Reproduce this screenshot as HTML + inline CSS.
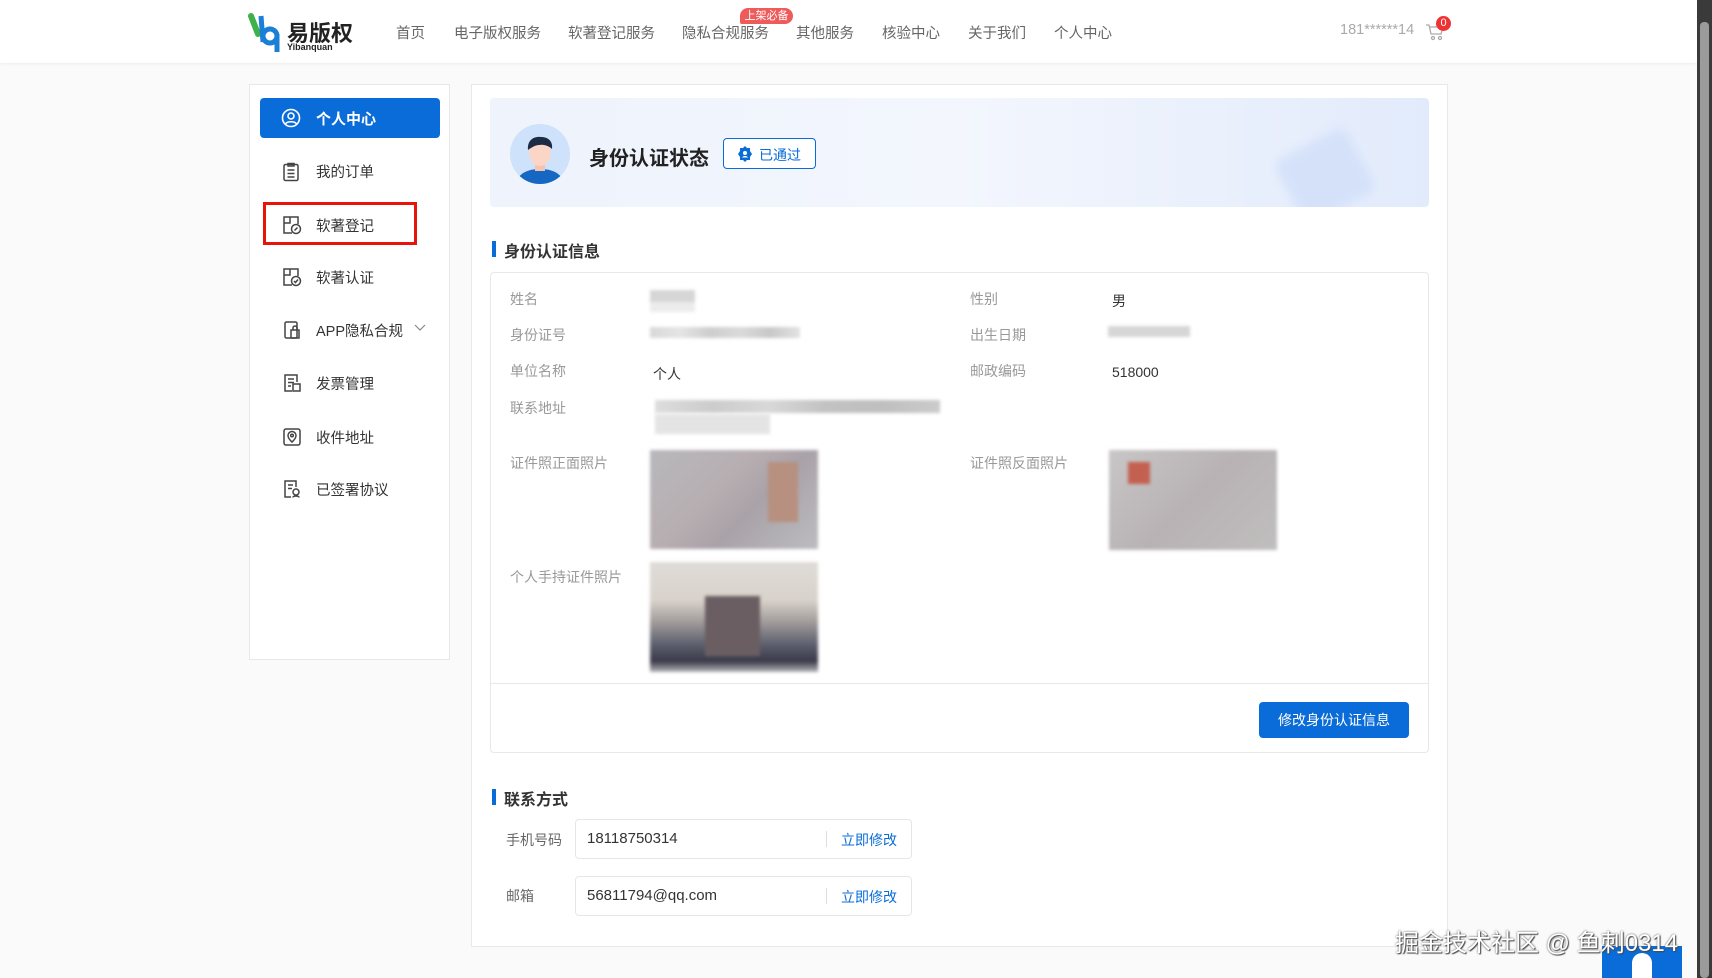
<!DOCTYPE html>
<html><head><meta charset="utf-8"><style>
*{margin:0;padding:0;box-sizing:border-box}
body{width:1712px;height:978px;overflow:hidden;background:#fafafa;font-family:"Liberation Sans","Noto Sans CJK SC",sans-serif;position:relative;color:#333}
.a{position:absolute}
.hdr{left:0;top:0;width:1697px;height:63px;background:#fff;box-shadow:0 1px 3px rgba(0,0,0,.06)}
.nav{top:22px;font-size:14.5px;color:#666;white-space:nowrap}
.side{left:249px;top:84px;width:201px;height:576px;background:#fff;border:1px solid #e8e8e8}
.mi{left:283px;font-size:14.5px;color:#333}
.ic{position:absolute}
.main{left:471px;top:84px;width:977px;height:863px;background:#fff;border:1px solid #e8e8e8}
.lbl{font-size:14px;color:#999}
.val{font-size:14px;color:#333}
.blur{filter:blur(1.5px)}
.h2{font-size:16px;font-weight:bold;color:#333;padding-left:12px}
.h2:before{content:"";position:absolute;left:0;top:3px;width:4px;height:16px;background:#0a6cd8}
.inp{left:575px;width:337px;height:40px;border:1px solid #e6e6e6;border-radius:4px;background:#fff}
</style></head><body>
<div class="a hdr"></div>
<svg class="a" style="left:248px;top:12px" width="42" height="42" viewBox="0 0 42 42"><path d="M3 4 L10 22" stroke="#3db24a" stroke-width="6" stroke-linecap="round"/><path d="M13 4 L15 30" stroke="#1a7fd6" stroke-width="5"/><circle cx="22" cy="24" r="7" fill="none" stroke="#1a7fd6" stroke-width="5"/><path d="M29 22 L29 40" stroke="#1a7fd6" stroke-width="5"/></svg>
<div class="a" style="left:287px;top:16px;font-size:22px;font-weight:bold;color:#222">易版权</div>
<div class="a" style="left:287px;top:42px;font-size:9px;font-weight:bold;color:#222">Yibanquan</div>
<div class="a nav" style="left:396px">首页</div>
<div class="a nav" style="left:454px">电子版权服务</div>
<div class="a nav" style="left:568px">软著登记服务</div>
<div class="a nav" style="left:682px">隐私合规服务</div>
<div class="a" style="left:740px;top:8px;width:53px;height:16px;background:#ef5a5a;border-radius:8px 8px 8px 2px;color:#fff;font-size:11px;text-align:center;line-height:16px">上架必备</div>
<div class="a nav" style="left:796px">其他服务</div>
<div class="a nav" style="left:882px">核验中心</div>
<div class="a nav" style="left:968px">关于我们</div>
<div class="a nav" style="left:1054px">个人中心</div>
<div class="a nav" style="left:1340px;color:#aaa">181******14</div>
<svg class="a" style="left:1425px;top:22px" width="20" height="20" viewBox="0 0 20 20" fill="none" stroke="#aaa" stroke-width="1.3"><path d="M1 3h3l2 9h10l2-7H5"/><circle cx="8" cy="16" r="1.5"/><circle cx="15" cy="16" r="1.5"/></svg>
<div class="a" style="left:1436px;top:16px;width:15px;height:15px;border-radius:50%;background:#e33;color:#fff;font-size:11px;text-align:center;line-height:15px">0</div>
<div class="a" style="left:1697px;top:0;width:15px;height:978px;background:#3a3a3a"></div>
<div class="a" style="left:1700px;top:22px;width:9px;height:956px;background:#9b9b9b;border-radius:4px"></div>

<div class="a side"></div>
<div class="a" style="left:260px;top:98px;width:180px;height:40px;background:#0a6cd8;border-radius:4px"></div>
<svg class="a" style="left:281px;top:108px" width="20" height="20" viewBox="0 0 20 20" fill="none" stroke="#fff" stroke-width="1.6"><circle cx="10" cy="10" r="8.5"/><circle cx="10" cy="8" r="3"/><path d="M4.5 16c1.5-3 9.5-3 11 0"/></svg>
<div class="a" style="left:316px;top:108px;font-size:15px;font-weight:bold;color:#fff">个人中心</div>
<svg class="ic" style="left:282px;top:162px" width="18" height="20" viewBox="0 0 18 20" fill="none" stroke="#444" stroke-width="1.5"><rect x="2" y="2.5" width="14" height="16" rx="1.5"/><path d="M6 1.5h6v2.5H6zM5.5 8h7M5.5 11.5h7M5.5 15h7"/></svg>
<div class="a mi" style="left:316px;top:161px">我的订单</div>
<svg class="ic" style="left:282px;top:215px" width="20" height="20" viewBox="0 0 20 20" fill="none" stroke="#444" stroke-width="1.5"><path d="M10 18H2V2h14v7M2 8h6V2"/><circle cx="14" cy="14" r="4.5"/><path d="M12.5 15.5l3-3"/></svg>
<div class="a mi" style="left:316px;top:215px">软著登记</div>
<div class="a" style="left:263px;top:202px;width:154px;height:43px;border:3px solid #e8140c"></div>
<svg class="ic" style="left:282px;top:267px" width="20" height="20" viewBox="0 0 20 20" fill="none" stroke="#444" stroke-width="1.5"><path d="M10 18H2V2h14v7M2 8h6V2"/><circle cx="14" cy="14" r="4.5"/><path d="M12 14l1.5 1.5 2.5-3"/></svg>
<div class="a mi" style="left:316px;top:267px">软著认证</div>
<svg class="ic" style="left:282px;top:320px" width="20" height="20" viewBox="0 0 20 20" fill="none" stroke="#444" stroke-width="1.5"><rect x="3" y="2" width="12" height="16" rx="1.5"/><rect x="9" y="10" width="8" height="8"/><path d="M11 10V8a2 2 0 014 0v2"/></svg>
<div class="a mi" style="left:316px;top:320px">APP隐私合规</div>
<svg class="a" style="left:414px;top:324px" width="12" height="8" viewBox="0 0 12 8" fill="none" stroke="#888" stroke-width="1.2"><path d="M1 1l5 5 5-5"/></svg>
<svg class="ic" style="left:282px;top:373px" width="20" height="20" viewBox="0 0 20 20" fill="none" stroke="#444" stroke-width="1.5"><path d="M15 9V2H3v16h7"/><path d="M6 6h6M6 9.5h6M6 13h3"/><rect x="11" y="11" width="7" height="7"/></svg>
<div class="a mi" style="left:316px;top:373px">发票管理</div>
<svg class="ic" style="left:282px;top:427px" width="20" height="20" viewBox="0 0 20 20" fill="none" stroke="#444" stroke-width="1.5"><rect x="2" y="2" width="16" height="16" rx="2"/><path d="M10 15s-4-3.5-4-6.5a4 4 0 018 0c0 3-4 6.5-4 6.5z"/><circle cx="10" cy="8.5" r="1.3"/></svg>
<div class="a mi" style="left:316px;top:427px">收件地址</div>
<svg class="ic" style="left:282px;top:479px" width="20" height="20" viewBox="0 0 20 20" fill="none" stroke="#444" stroke-width="1.5"><path d="M14 8V2H3v16h6"/><path d="M6 6h5M6 9.5h4"/><circle cx="14" cy="13" r="3"/><path d="M11 18.5c0-2 6-2 6 0"/></svg>
<div class="a mi" style="left:316px;top:479px">已签署协议</div>

<div class="a main"></div>
<div class="a" style="left:490px;top:98px;width:939px;height:109px;border-radius:4px;overflow:hidden;background:linear-gradient(90deg,#eef3fc,#f3f6fd 50%,#e2ebfc)">
<div class="a" style="left:795px;top:42px;width:80px;height:72px;background:#c9daf8;border-radius:10px;transform:rotate(-28deg);filter:blur(5px);opacity:.6"></div>
</div>
<svg class="a" style="left:510px;top:124px" width="60" height="60" viewBox="0 0 60 60"><defs><clipPath id="c"><circle cx="30" cy="30" r="30"/></clipPath></defs><circle cx="30" cy="30" r="30" fill="#cfe2fb"/><g clip-path="url(#c)"><path d="M6 60c2-12 14-15 24-15s22 3 24 15z" fill="#1667c3"/><rect x="25" y="38" width="10" height="9" fill="#f5c4b0"/><ellipse cx="30" cy="29" rx="11" ry="13" fill="#fbd6c6"/><path d="M18 26c-1-10 6-14 13-13 8 0 12 5 11 12-3-3-8-5-13-4-3 0-7 2-11 5z" fill="#1d2b44"/></g></svg>
<div class="a" style="left:589px;top:142px;font-size:20px;font-weight:bold;color:#222">身份认证状态</div>
<div class="a" style="left:723px;top:138px;width:93px;height:31px;border:1px solid #0a6cd8;border-radius:4px;background:#fff"></div>
<svg class="a" style="left:737px;top:146px" width="16" height="16" viewBox="0 0 16 16"><path d="M8 0l2 2h3v3l2 3-2 3v3h-3l-2 2-2-2H3v-3L1 8l2-3V2h3z" fill="#0a6cd8"/><circle cx="8" cy="7" r="2" fill="#fff"/><path d="M5 11.5c1-2 5-2 6 0z" fill="#fff"/></svg>
<div class="a" style="left:759px;top:145px;font-size:14px;color:#0a6cd8">已通过</div>

<div class="a h2" style="left:492px;top:238px">身份认证信息</div>
<div class="a" style="left:490px;top:272px;width:939px;height:481px;border:1px solid #e8e8e8;border-radius:4px"></div>
<div class="a" style="left:490px;top:683px;width:939px;height:1px;background:#e8e8e8"></div>
<div class="a lbl" style="left:510px;top:289px">姓名</div>
<div class="a blur" style="left:650px;top:290px;width:45px;height:22px;background:linear-gradient(#d6d6d6 55%,#ececec 55%)"></div>
<div class="a lbl" style="left:510px;top:325px">身份证号</div>
<div class="a blur" style="left:650px;top:327px;width:150px;height:11px;background:linear-gradient(90deg,#d8d8d8,#e5e5e5,#cdcdcd,#dadada,#c8c8c8,#e2e2e2)"></div>
<div class="a lbl" style="left:510px;top:361px">单位名称</div>
<div class="a val" style="left:653px;top:364px">个人</div>
<div class="a lbl" style="left:510px;top:398px">联系地址</div>
<div class="a blur" style="left:655px;top:400px;width:285px;height:13px;background:linear-gradient(90deg,#ddd,#ccc,#d8d8d8,#c2c2c2,#bfbfbf,#cbcbcb)"></div>
<div class="a blur" style="left:655px;top:414px;width:115px;height:20px;background:#e4e4e4"></div>
<div class="a lbl" style="left:510px;top:453px">证件照正面照片</div>
<div class="a blur" style="left:650px;top:450px;width:168px;height:99px;background:linear-gradient(135deg,#b8b8bc,#b7aeb1 40%,#a9a2a8 60%,#bcbcc0)"></div>
<div class="a blur" style="left:768px;top:462px;width:30px;height:60px;background:#b79080"></div>
<div class="a lbl" style="left:510px;top:567px">个人手持证件照片</div>
<div class="a blur" style="left:650px;top:562px;width:168px;height:110px;background:linear-gradient(#dfdcd8 0,#d8d2ca 35%,#a09a9a 55%,#5d606e 75%,#3a3a4a 90%,#b5b5b8)"></div>
<div class="a blur" style="left:705px;top:596px;width:55px;height:60px;background:#6a5e62"></div>
<div class="a lbl" style="left:970px;top:289px">性别</div>
<div class="a val" style="left:1112px;top:291px">男</div>
<div class="a lbl" style="left:970px;top:325px">出生日期</div>
<div class="a blur" style="left:1108px;top:326px;width:82px;height:11px;background:#d6d6d6"></div>
<div class="a lbl" style="left:970px;top:361px">邮政编码</div>
<div class="a val" style="left:1112px;top:364px">518000</div>
<div class="a lbl" style="left:970px;top:453px">证件照反面照片</div>
<div class="a blur" style="left:1109px;top:450px;width:168px;height:100px;background:linear-gradient(135deg,#c8c6c6,#b8b2b4 50%,#c0bebe)"></div>
<div class="a blur" style="left:1128px;top:462px;width:22px;height:22px;background:#c46050"></div>
<div class="a" style="left:1259px;top:702px;width:150px;height:36px;background:#0a6cd8;border-radius:4px;color:#fff;font-size:14px;text-align:center;line-height:36px">修改身份认证信息</div>

<div class="a h2" style="left:492px;top:786px">联系方式</div>
<div class="a lbl" style="left:506px;top:830px;color:#666">手机号码</div>
<div class="a inp" style="top:819px"></div>
<div class="a" style="left:587px;top:830px;font-size:15px;color:#333">18118750314</div>
<div class="a" style="left:826px;top:831px;width:1px;height:16px;background:#ddd"></div>
<div class="a" style="left:841px;top:830px;font-size:14px;color:#0a6cd8">立即修改</div>
<div class="a lbl" style="left:506px;top:886px;color:#666">邮箱</div>
<div class="a inp" style="top:876px"></div>
<div class="a" style="left:587px;top:887px;font-size:15px;color:#333">56811794@qq.com</div>
<div class="a" style="left:826px;top:888px;width:1px;height:16px;background:#ddd"></div>
<div class="a" style="left:841px;top:887px;font-size:14px;color:#0a6cd8">立即修改</div>

<div class="a" style="left:1602px;top:946px;width:80px;height:32px;background:#0a6cd8"></div>
<div class="a" style="left:1632px;top:953px;width:20px;height:25px;background:#fff;border-radius:10px 10px 0 0"></div>
<div class="a" style="left:1395px;top:923px;font-size:24px;color:#fff;text-shadow:0 0 2px #555,1px 1px 1px #444;white-space:nowrap">掘金技术社区 @ 鱼刺0314</div>
</body></html>
